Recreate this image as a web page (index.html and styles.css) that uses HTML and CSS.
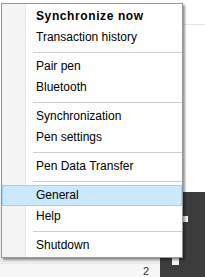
FILE: index.html
```html
<!DOCTYPE html>
<html>
<head>
<meta charset="utf-8">
<link rel="stylesheet" href="styles.css">
</head>
<body>
<div class="desktop">
  <div class="upper">
    <div class="upper-line"></div>
  </div>
  <div class="lower">
    <div class="panel">
      <div class="panel-band"></div>
      <div class="panel-foot"><span class="clock">2</span></div>
    </div>
    <div class="taskbar">
      <div class="tray-icon tray-a"></div>
      <div class="tray-icon tray-b"></div>
    </div>
  </div>
  <div class="menu">
    <div class="item bold">Synchronize now</div>
    <div class="item">Transaction history</div>
    <div class="sep"></div>
    <div class="item">Pair pen</div>
    <div class="item">Bluetooth</div>
    <div class="sep"></div>
    <div class="item">Synchronization</div>
    <div class="item">Pen settings</div>
    <div class="sep"></div>
    <div class="item">Pen Data Transfer</div>
    <div class="sep"></div>
    <div class="item active">General</div>
    <div class="item">Help</div>
    <div class="sep"></div>
    <div class="item">Shutdown</div>
  </div>
</div>
</body>
</html>
```
FILE: styles.css
```css
html, body {
  margin: 0;
  padding: 0;
  background: #ffffff;
}
.desktop {
  position: relative;
  width: 205px;
  height: 277px;
  overflow: hidden;
  font-family: "Liberation Sans", Arial, sans-serif;
}
.upper {
  height: 192px;
  background: #ffffff;
  display: flex;
  justify-content: flex-end;
}
.upper-line {
  width: 22px;
  height: 1px;
  margin-top: 24px;
  background: #e4e4e4;
}
.lower {
  height: 85px;
  display: flex;
}
.panel {
  width: 160px;
  display: flex;
  flex-direction: column;
}
.panel-band {
  height: 76px;
  background: #ececec;
}
.panel-foot {
  flex: 1;
  background: #f6f6f6;
  position: relative;
}
.clock {
  display: block;
  margin-left: 143px;
  margin-top: 2px;
  font-size: 11px;
  line-height: 11px;
  color: #333;
}
.taskbar {
  flex: 1;
  background: #3c3c3c;
  overflow: hidden;
}
.tray-icon {
  background: #f2f2f2;
}
.tray-a {
  width: 5px;
  height: 6px;
  margin-left: 23px;
  margin-top: 24px;
}
.tray-b {
  width: 7px;
  height: 7px;
  margin-left: 12px;
  margin-top: 36px;
}
.menu {
  position: absolute;
  left: 1px;
  top: 3px;
  width: 180px;
  padding: 2px 0 1px 0;
  border: 1px solid #979797;
  background: linear-gradient(to right, #f4f4f4 0, #f4f4f4 23px, #ebebeb 23px, #ebebeb 24px, #ffffff 24px);
  box-shadow: 2px 2px 2px rgba(0, 0, 0, 0.4);
}
.item {
  height: 21px;
  line-height: 21px;
  padding-left: 34px;
  font-size: 12px;
  color: #000;
  white-space: nowrap;
  box-sizing: border-box;
}
.bold {
  font-weight: bold;
  letter-spacing: 0.6px;
}
.active {
  background: #cce8ff;
  border: 1px solid #99d1ff;
  line-height: 19px;
  padding-left: 33px;
}
.sep {
  height: 1px;
  margin: 4px 0 3px 31px;
  background: #cfcfcf;
}
```
